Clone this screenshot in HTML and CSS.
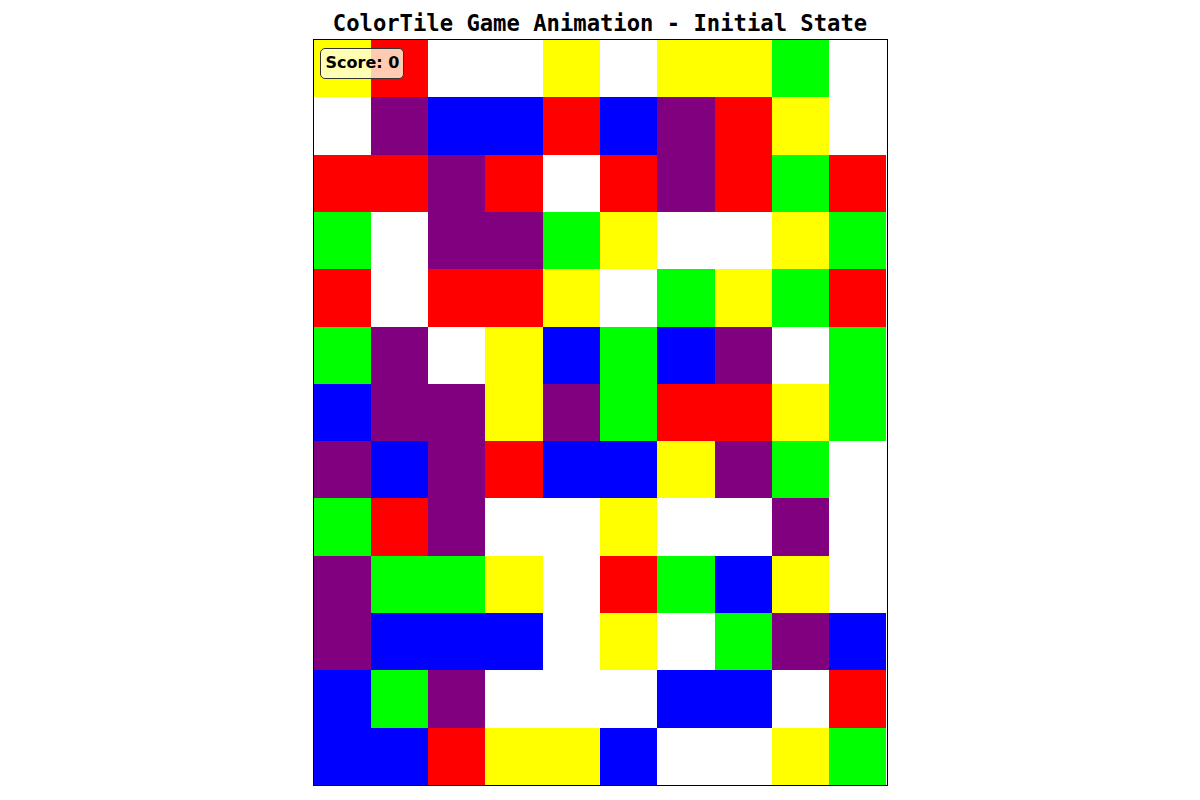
FILE: index.html
```html
<!DOCTYPE html>
<html lang="en">
<head>
    <meta charset="UTF-8">
    <title>ColorTile Game Animation</title>
    <link rel="stylesheet" href="styles.css">
</head>
<body>
    <div class="figure">
        <h1 class="title">ColorTile Game Animation - Initial State</h1>
        <div class="board">
            <div class="tiles">
                <div class="t y"></div><div class="t r"></div><div class="t w"></div><div class="t w"></div><div class="t y"></div><div class="t w"></div><div class="t y"></div><div class="t y"></div><div class="t g"></div><div class="t w"></div>
                <div class="t w"></div><div class="t p"></div><div class="t b"></div><div class="t b"></div><div class="t r"></div><div class="t b"></div><div class="t p"></div><div class="t r"></div><div class="t y"></div><div class="t w"></div>
                <div class="t r"></div><div class="t r"></div><div class="t p"></div><div class="t r"></div><div class="t w"></div><div class="t r"></div><div class="t p"></div><div class="t r"></div><div class="t g"></div><div class="t r"></div>
                <div class="t g"></div><div class="t w"></div><div class="t p"></div><div class="t p"></div><div class="t g"></div><div class="t y"></div><div class="t w"></div><div class="t w"></div><div class="t y"></div><div class="t g"></div>
                <div class="t r"></div><div class="t w"></div><div class="t r"></div><div class="t r"></div><div class="t y"></div><div class="t w"></div><div class="t g"></div><div class="t y"></div><div class="t g"></div><div class="t r"></div>
                <div class="t g"></div><div class="t p"></div><div class="t w"></div><div class="t y"></div><div class="t b"></div><div class="t g"></div><div class="t b"></div><div class="t p"></div><div class="t w"></div><div class="t g"></div>
                <div class="t b"></div><div class="t p"></div><div class="t p"></div><div class="t y"></div><div class="t p"></div><div class="t g"></div><div class="t r"></div><div class="t r"></div><div class="t y"></div><div class="t g"></div>
                <div class="t p"></div><div class="t b"></div><div class="t p"></div><div class="t r"></div><div class="t b"></div><div class="t b"></div><div class="t y"></div><div class="t p"></div><div class="t g"></div><div class="t w"></div>
                <div class="t g"></div><div class="t r"></div><div class="t p"></div><div class="t w"></div><div class="t w"></div><div class="t y"></div><div class="t w"></div><div class="t w"></div><div class="t p"></div><div class="t w"></div>
                <div class="t p"></div><div class="t g"></div><div class="t g"></div><div class="t y"></div><div class="t w"></div><div class="t r"></div><div class="t g"></div><div class="t b"></div><div class="t y"></div><div class="t w"></div>
                <div class="t p"></div><div class="t b"></div><div class="t b"></div><div class="t b"></div><div class="t w"></div><div class="t y"></div><div class="t w"></div><div class="t g"></div><div class="t p"></div><div class="t b"></div>
                <div class="t b"></div><div class="t g"></div><div class="t p"></div><div class="t w"></div><div class="t w"></div><div class="t w"></div><div class="t b"></div><div class="t b"></div><div class="t w"></div><div class="t r"></div>
                <div class="t b"></div><div class="t b"></div><div class="t r"></div><div class="t y"></div><div class="t y"></div><div class="t b"></div><div class="t w"></div><div class="t w"></div><div class="t y"></div><div class="t g"></div>
            </div>
            <div class="score">Score: 0</div>
        </div>
    </div>
</body>
</html>
```

FILE: styles.css
```css
body {
    margin: 0;
    padding: 0;
    background-color: #fff;
    font-family: "DejaVu Sans", sans-serif;
}
.figure {
    width: 1200px;
    height: 800px;
    display: flex;
    flex-direction: column;
    align-items: center;
}
.title {
    margin: 0;
    height: 39px;
    line-height: 46px;
    font-family: "DejaVu Sans Mono", monospace;
    font-size: 22.2px;
    font-weight: bold;
    color: #000;
}
.board {
    position: relative;
    width: 575px;
    height: 747px;
    border: 1px solid #000;
    box-sizing: border-box;
}
.tiles {
    width: 100%;
    height: 100%;
    display: grid;
    grid-template-columns: repeat(10, 1fr);
    grid-template-rows: repeat(13, 1fr);
}
.t.y { background-color: #ffff00; }
.t.r { background-color: #ff0000; }
.t.w { background-color: #ffffff; }
.t.g { background-color: #00ff00; }
.t.b { background-color: #0000ff; }
.t.p { background-color: #800080; }
.score {
    position: absolute;
    left: 6px;
    top: 8px;
    padding: 4px 4px 5px 5px;
    font-size: 16px;
    font-weight: bold;
    line-height: 20px;
    color: #000;
    background-color: rgba(255, 255, 224, 0.8);
    border: 1px solid #333;
    border-radius: 5px;
}
```
